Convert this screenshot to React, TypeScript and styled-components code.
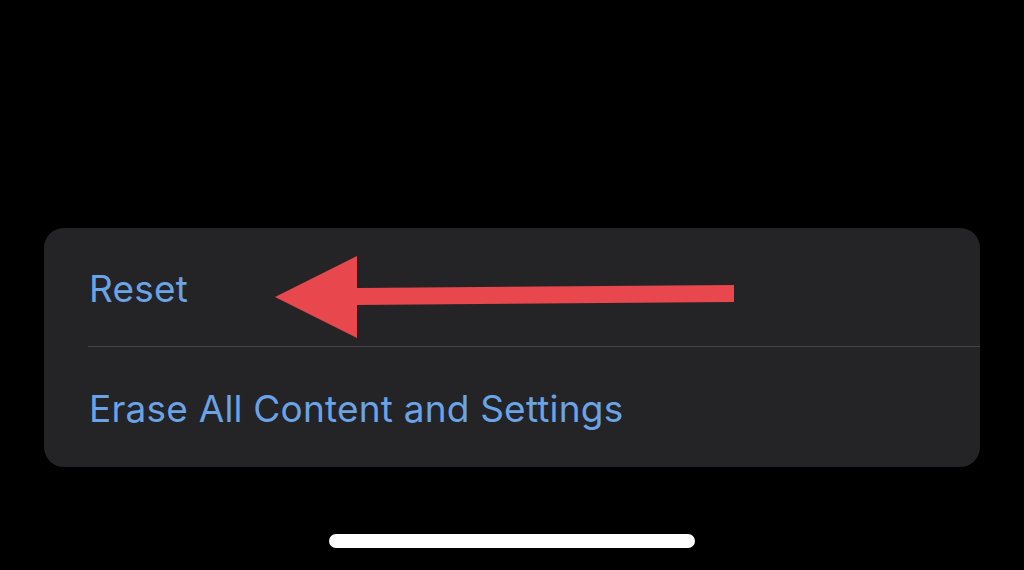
import React from "react";
import styled, {createGlobalStyle} from "styled-components";

const Colors = {
  Background: "#000000",
  Card: "#242426",
  Separator: "#434345",
  Link: "#6aa3e6",
  Arrow: "#e8474d",
  Indicator: "#ffffff",
};

const GlobalStyle = createGlobalStyle`
  html, body {
    margin: 0;
    padding: 0;
    background-color: ${Colors.Background};
  }

  body {
    font-family: Inter, "Noto Sans", "Liberation Sans", sans-serif;
    -webkit-font-smoothing: antialiased;
  }
`;

const Screen = styled.main`
  display: flex;
  flex-direction: column;
  align-items: stretch;

  width: 1024px;
  height: 570px;

  padding: 228px 44px 0px 44px;
  box-sizing: border-box;

  overflow: hidden;
`;

const Card = styled.section`
  position: relative;

  display: flex;
  flex-direction: column;

  height: 239px;

  background-color: ${Colors.Card};
  border-radius: 20px;

  overflow: hidden;
`;

const Row = styled.div`
  display: flex;

  height: 119px;

  padding-left: 44px;
`;

const RowInner = styled.div<{$divider?: boolean}>`
  display: flex;
  align-items: center;
  flex: 1;

  padding-top: 3px;
  padding-left: 1px;

  border-bottom: ${({$divider}) => ($divider ? `1px solid ${Colors.Separator}` : "none")};
`;

const Label = styled.span`
  color: ${Colors.Link};

  font-size: 37px;
  font-weight: 400;
  letter-spacing: 0.2px;
  line-height: 1;
`;

const Annotation = styled.svg`
  position: absolute;
  left: 228px;
  top: 26px;

  pointer-events: none;
`;

const HomeIndicator = styled.div`
  align-self: center;

  width: 366px;
  height: 14px;

  margin-top: 67px;

  background-color: ${Colors.Indicator};
  border-radius: 7px;
`;

const Arrow: React.FC = () => (
  <Annotation width="470" height="90" viewBox="0 0 470 90">
    <polygon
      fill={Colors.Arrow}
      points="3,43 85,2 85,34 462,31 462,48 85,51 85,84"
    />
  </Annotation>
);

const App: React.FC = () => {
  return (
    <>
      <GlobalStyle />
      <Screen>
        <Card>
          <Row>
            <RowInner $divider>
              <Label>Reset</Label>
            </RowInner>
          </Row>
          <Row>
            <RowInner>
              <Label>Erase All Content and Settings</Label>
            </RowInner>
          </Row>
          <Arrow />
        </Card>
        <HomeIndicator />
      </Screen>
    </>
  );
};

export default App;
